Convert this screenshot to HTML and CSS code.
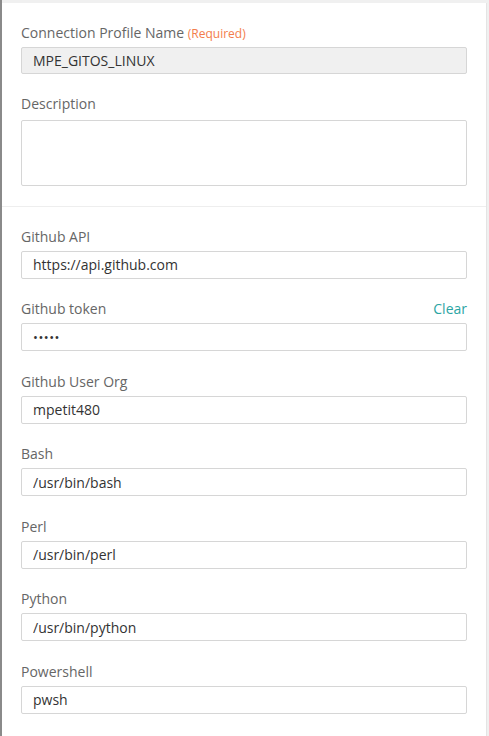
FILE: index.html
```html
<!DOCTYPE html>
<html>
<head>
<meta charset="utf-8">
<link rel="stylesheet" href="styles.css">
</head>
<body>
<div class="frame">
  <div class="panel">
    <section class="section">
      <div class="field">
        <div class="label-row"><label class="label">Connection Profile Name <span class="req">(Required)</span></label></div>
        <input class="input input-disabled" type="text" value="MPE_GITOS_LINUX" readonly>
      </div>
      <div class="field">
        <div class="label-row label-row-desc"><label class="label">Description</label></div>
        <textarea class="textarea"></textarea>
      </div>
    </section>
    <section class="section section-bordered">
      <div class="field">
        <div class="label-row"><label class="label">Github API</label></div>
        <input class="input" type="text" value="https://api.github.com" readonly>
      </div>
      <div class="field">
        <div class="label-row"><label class="label">Github token</label><a class="clear">Clear</a></div>
        <input class="input input-pw" type="password" value="abcde" readonly>
      </div>
      <div class="field">
        <div class="label-row"><label class="label">Github User Org</label></div>
        <input class="input" type="text" value="mpetit480" readonly>
      </div>
      <div class="field">
        <div class="label-row"><label class="label">Bash</label></div>
        <input class="input" type="text" value="/usr/bin/bash" readonly>
      </div>
      <div class="field">
        <div class="label-row"><label class="label">Perl</label></div>
        <input class="input" type="text" value="/usr/bin/perl" readonly>
      </div>
      <div class="field">
        <div class="label-row"><label class="label">Python</label></div>
        <input class="input" type="text" value="/usr/bin/python" readonly>
      </div>
      <div class="field">
        <div class="label-row"><label class="label">Powershell</label></div>
        <input class="input" type="text" value="pwsh" readonly>
      </div>
    </section>
  </div>
</div>
</body>
</html>
```
FILE: styles.css
```css
* { box-sizing: border-box; }
html, body {
  margin: 0;
  padding: 0;
  height: 100%;
}
body {
  font-family: "Open Sans", "Noto Sans", sans-serif;
  font-size: 14px;
  color: #333;
  background: #f2f2f2;
  overflow: hidden;
}
.frame {
  height: 736px;
  padding-top: 3px;
  padding-right: 2px;
  border-left: 2px solid #8a8a8a;
  background: #f0f0f0;
  display: flex;
}
.panel {
  flex: 1;
  background: #fff;
  border-right: 1px solid #e4e4e4;
}
.section {
  padding: 20px 19px 20px 19px;
  display: flex;
  flex-direction: column;
  gap: 20px;
}
.section-bordered {
  border-top: 1px solid #eeeeee;
  padding-top: 19.5px;
  gap: 20.5px;
}
.field {
  display: flex;
  flex-direction: column;
}
.label-row {
  display: flex;
  justify-content: space-between;
  align-items: baseline;
  height: 20px;
  line-height: 20px;
  margin-bottom: 4px;
}
.label-row-desc { margin-bottom: 6px; }
.label {
  color: #666;
  font-size: 14px;
}
.req {
  color: #f37d4c;
  font-size: 12px;
}
.clear {
  color: #2ba5a3;
  font-size: 14px;
  cursor: pointer;
}
.input {
  display: block;
  width: 100%;
  height: 28px;
  border: 1px solid #d6d6d6;
  border-radius: 2px;
  padding: 0 11px;
  font-family: "Open Sans", "Noto Sans", sans-serif;
  font-size: 14px;
  color: #333;
  background: #fff;
  outline: none;
}
.input-disabled {
  height: 27px;
  background: #f0f0f0;
}
.input-pw {
  font-size: 13px;
  letter-spacing: 0.5px;
}
.textarea {
  display: block;
  width: 100%;
  height: 66px;
  border: 1px solid #d6d6d6;
  border-radius: 2px;
  resize: none;
  font-family: "Open Sans", "Noto Sans", sans-serif;
  font-size: 14px;
  outline: none;
}
```
